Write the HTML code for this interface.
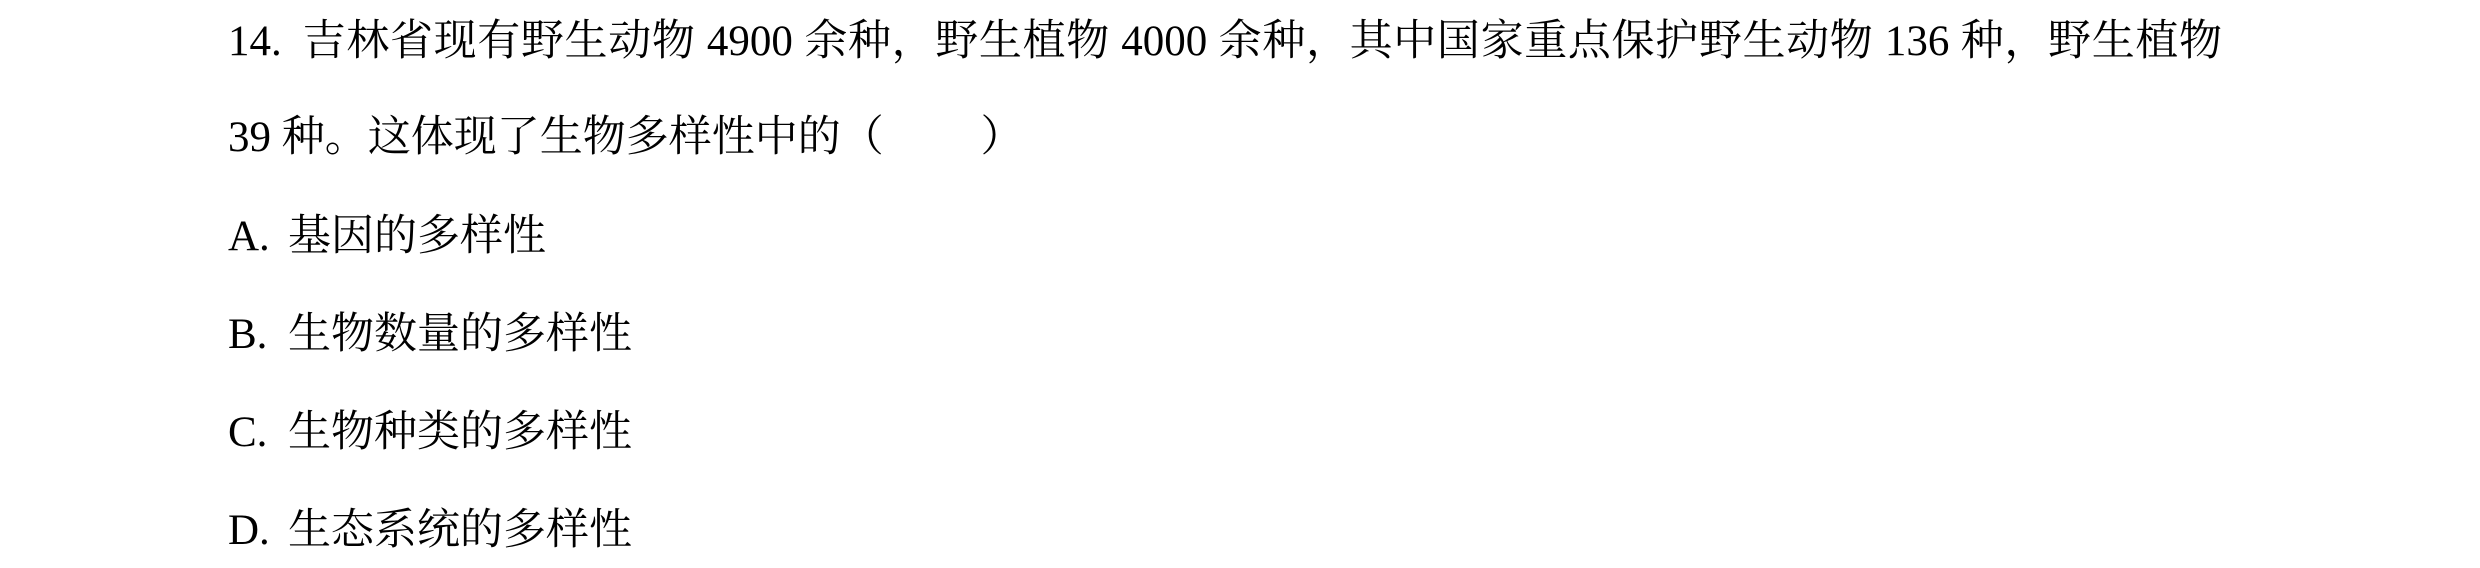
<!DOCTYPE html>
<html><head><meta charset="utf-8"><style>
html,body{margin:0;padding:0;background:#fff;}
body{width:2480px;height:568px;position:relative;overflow:hidden;
font-family:"Liberation Serif","Noto Serif CJK SC",serif;font-size:43px;color:#000;}
.l{position:absolute;left:228px;white-space:pre;line-height:50px;}
.j{width:1994px;text-align:justify;text-align-last:justify;}
.lab{display:inline-block;width:60px;}
</style></head><body>
<div class="l j" style="top:17px;"><span style="display:inline-block;width:74px">14.</span>吉林省现有野生动物 4900 余种，野生植物 4000 余种，其中国家重点保护野生动物 136 种，野生植物</div>
<div class="l" style="top:113px;">39 种。这体现了生物多样性中的（　　 ）</div>
<div class="l" style="top:212px;"><span class="lab">A.</span>基因的多样性</div>
<div class="l" style="top:310px;"><span class="lab">B.</span>生物数量的多样性</div>
<div class="l" style="top:408px;"><span class="lab">C.</span>生物种类的多样性</div>
<div class="l" style="top:506px;"><span class="lab">D.</span>生态系统的多样性</div>
</body></html>
